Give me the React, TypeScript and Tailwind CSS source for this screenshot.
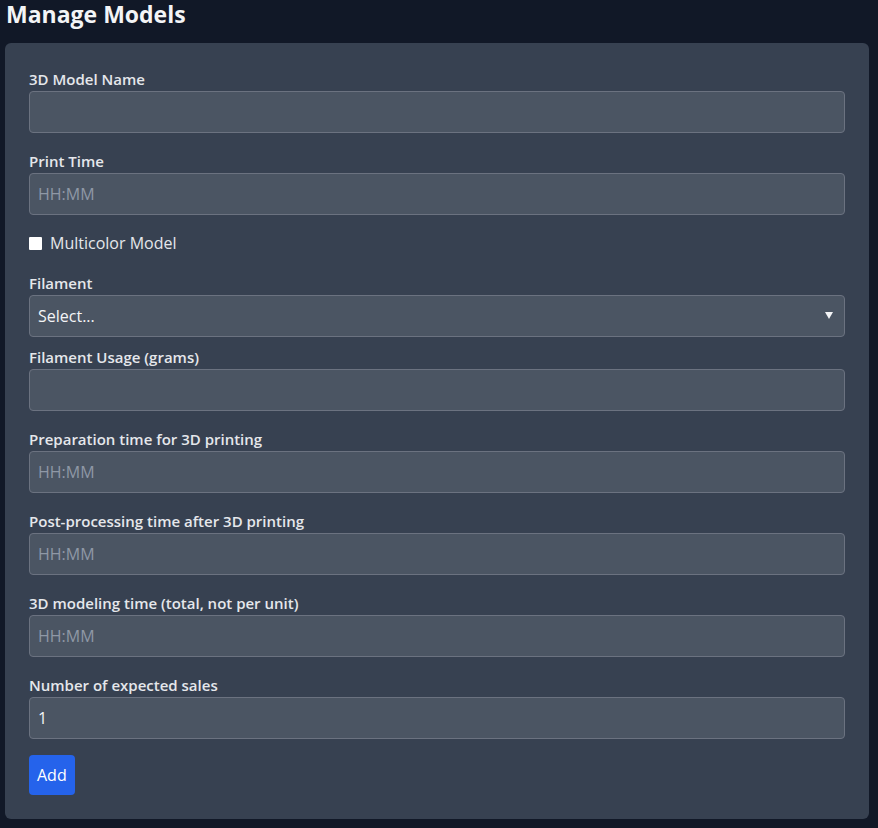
import React from "react";

const font = { fontFamily: '"Open Sans", "Noto Sans", sans-serif' };

function Label({ children }: { children: React.ReactNode }) {
  return <label className="block text-[15px] leading-6 font-semibold text-[#e5e7eb]">{children}</label>;
}

function TextInput({ placeholder, value }: { placeholder?: string; value?: string }) {
  return (
    <input
      type="text"
      placeholder={placeholder}
      defaultValue={value}
      className="block w-full h-[42px] px-2 rounded bg-[#4b5563] border border-[#6b7280] text-base text-[#f3f4f6] placeholder:text-[#8f98a6] outline-none"
      style={font}
    />
  );
}

export default function App() {
  return (
    <div className="min-h-screen bg-[#111827] px-[5px]" style={font}>
      <h1 className="text-[23px] leading-[28px] font-bold text-[#f3f4f6] pl-px">Manage Models</h1>
      <div className="mt-[15px] w-[864px] bg-[#374151] rounded-md p-6">
        <div className="mb-4">
          <Label>3D Model Name</Label>
          <TextInput />
        </div>
        <div className="mb-4">
          <Label>Print Time</Label>
          <TextInput placeholder="HH:MM" />
        </div>
        <div className="mb-4 flex items-center h-6">
          <input type="checkbox" className="appearance-none w-[13px] h-[13px] bg-white rounded-[1px] m-0" />
          <span className="ml-2 text-base text-[#e5e7eb]">Multicolor Model</span>
        </div>
        <div className="mb-2">
          <Label>Filament</Label>
          <div className="relative h-[42px] w-full rounded bg-[#4b5563] border border-[#6b7280] flex items-center px-2 text-base text-[#f3f4f6]">
            <span>Select...</span>
            <svg className="absolute right-[11px] top-[16px]" width="8" height="7" viewBox="0 0 8 7">
              <path d="M0 0 L8 0 L4 7 Z" fill="#f3f4f6" />
            </svg>
          </div>
        </div>
        <div className="mb-4">
          <Label>Filament Usage (grams)</Label>
          <TextInput />
        </div>
        <div className="mb-4">
          <Label>Preparation time for 3D printing</Label>
          <TextInput placeholder="HH:MM" />
        </div>
        <div className="mb-4">
          <Label>Post-processing time after 3D printing</Label>
          <TextInput placeholder="HH:MM" />
        </div>
        <div className="mb-4">
          <Label>3D modeling time (total, not per unit)</Label>
          <TextInput placeholder="HH:MM" />
        </div>
        <div className="mb-4">
          <Label>Number of expected sales</Label>
          <TextInput value="1" />
        </div>
        <button className="h-10 px-2 rounded bg-[#2563eb] text-white text-base">Add</button>
      </div>
    </div>
  );
}
